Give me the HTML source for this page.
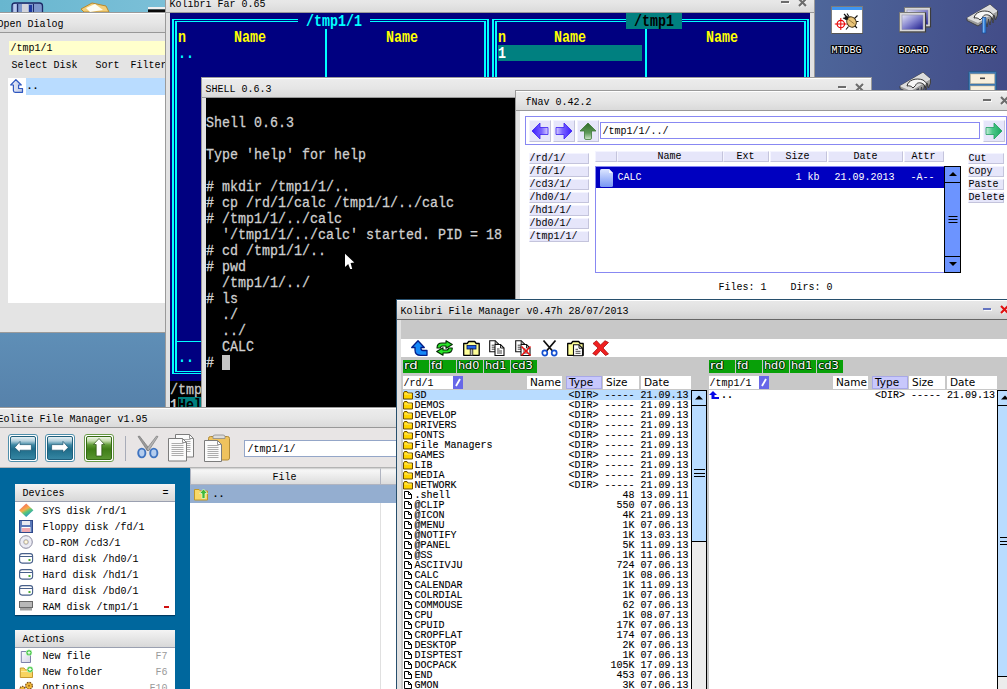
<!DOCTYPE html>
<html><head><meta charset="utf-8"><title>KolibriOS desktop</title>
<style>
html,body{margin:0;padding:0}
body{width:1007px;height:689px;overflow:hidden;position:relative;
background:linear-gradient(143deg,rgb(126,190,220) 0%,rgb(118,178,210) 8%,rgb(90,135,178) 29.8%,rgb(72,96,152) 45.1%,rgb(60,64,127) 54.7%,rgb(52,54,116) 72%,rgb(46,46,106) 100%);
font-family:"Liberation Mono",monospace;font-size:10px;line-height:10px;color:#000}
.a{position:absolute;box-sizing:border-box}
.t{position:absolute;white-space:pre;font:10px/10px "Liberation Mono",monospace;color:#000}
.v{margin-top:2px;position:absolute;white-space:pre;font:13.333px/14px "Liberation Mono",monospace;color:#d0d0d0;-webkit-text-stroke:0.25px currentColor;transform:scaleY(1.143);transform-origin:0 0}
.vb{position:absolute;white-space:pre;font:bold 13.333px/14px "Liberation Mono",monospace;margin-top:0.500px;transform:scaleY(1.180);transform-origin:0 0}
.k{position:absolute;white-space:pre;font:10px/10px "Liberation Mono",monospace;color:#000;-webkit-text-stroke:0.1px currentColor}
.w{position:absolute;white-space:pre;font:10px/10px "DejaVu Sans",sans-serif;color:#000}
.win{position:absolute;box-sizing:border-box;background:#e2e2e2;border:1px solid #9a9a9a}
.tb{position:absolute;left:0;right:0;top:0;height:19px;background:linear-gradient(#ececec,#e6e6e6 50%,#dadada);border-top:1px solid #fff;border-bottom:1px solid #989898;box-sizing:content-box}
svg{position:absolute;overflow:visible}
.cy{position:absolute;background:#0ff}
</style></head><body>

<!-- desktop wallpaper patches -->
<div class="a" style="left:0px;top:0px;width:170px;height:14px;background:linear-gradient(90deg,rgb(104,182,207),rgb(124,192,216))"></div>
<div class="a" style="left:0px;top:330px;width:170px;height:80px;background:linear-gradient(180deg,rgb(95,143,183),rgb(86,129,170))"></div>
<div class="a" style="left:810px;top:0px;width:197px;height:100px;background:linear-gradient(100deg,rgb(78,103,155),rgb(66,75,135))"></div>
<!-- desktop icons -->
<svg style="left:0;top:0" width="170" height="14" viewBox="0 0 170 14"><rect x="12" y="3" width="30.500" height="12" rx="3" fill="#7d97cc" stroke="#1c2a66" stroke-width="1.300"/><rect x="13.500" y="4" width="3" height="10" fill="#b8c8ec"/><rect x="17" y="4" width="1.200" height="10" fill="#1c2a66"/><rect x="22" y="4" width="6.500" height="10" fill="#d2d4dc"/><rect x="29" y="5" width="3" height="7" fill="#1f3aa0"/><rect x="33" y="4" width="1" height="10" fill="#1c2a66"/><path d="M81 9 L92 3 L106 6 L109 12 L84 12 Z" fill="#f3cf7a" stroke="#b98a2c" stroke-width="1"/><path d="M86 8 L95 4 L103 10 L90 12 Z" fill="#fdfdf4"/><rect x="148" y="7" width="18" height="2.4" fill="#f0f0f0"/><rect x="148" y="9.4" width="18" height="2.6" fill="#0a0a0a"/></svg>
<svg style="left:831px;top:6px" width="34" height="30" viewBox="0 0 34 30"><rect x="0.500" y="0.500" width="31" height="27" fill="#fff" stroke="#7c7c7c"/><rect x="1" y="1" width="30" height="3" fill="#3f95f0"/><path d="M0.500 27.500H32" stroke="#555" stroke-width="1"/><path d="M13 8 L17 12 M16 7.500 L18.500 11.500 M26.500 9.500 L23.500 12.500 M27.500 15.500 H24.500 M26 22 L23.500 19.500 M15 23.500 L17.500 20.500 M12 12 L15 13" stroke="#111" stroke-width="1.100" fill="none"/><ellipse cx="20.500" cy="16" rx="4.600" ry="5.400" transform="rotate(-30 20.500 16)" fill="#e9c478" stroke="#3c2c10" stroke-width="0.900"/><path d="M17.500 13.500 L23.500 18" stroke="#8a6a30" stroke-width="0.800"/><circle cx="15.300" cy="12" r="2" fill="#111"/><circle cx="9.800" cy="18" r="3.700" fill="none" stroke="#e80000" stroke-width="1.150"/><path d="M9.800 12V24M3.800 18H15.800" stroke="#e80000" stroke-width="1"/></svg>
<div class="t" style="left:831.4px;top:46px;color:#fff;text-shadow:1px 0 #000,-1px 0 #000,0 1px #000,0 -1px #000,1px 1px #000,-1px -1px #000,1px -1px #000,-1px 1px #000;">MTDBG</div>
<svg style="left:899px;top:6px" width="34" height="30" viewBox="0 0 34 30"><defs><linearGradient id="scr" x1="0" y1="0" x2="1" y2="1"><stop offset="0" stop-color="#e4e4f6"/><stop offset="0.5" stop-color="#8080cc"/><stop offset="1" stop-color="#1c1c8a"/></linearGradient></defs><rect x="5.5" y="1.5" width="26" height="19.500" fill="#d8d8d8" stroke="#7a7a7a" stroke-width="1"/><path d="M5.5 21.0H31.5V1.5" stroke="#3c3c3c" stroke-width="1.200" fill="none"/><rect x="8.0" y="4.0" width="21" height="14.500" fill="url(#scr)" stroke="#8c8cac" stroke-width="0.600"/><rect x="0.5" y="6.5" width="26" height="19.500" fill="#d8d8d8" stroke="#7a7a7a" stroke-width="1"/><path d="M0.5 26.0H26.5V6.5" stroke="#3c3c3c" stroke-width="1.200" fill="none"/><rect x="3.0" y="9.0" width="21" height="14.500" fill="url(#scr)" stroke="#8c8cac" stroke-width="0.600"/></svg>
<div class="t" style="left:898.4px;top:46px;color:#fff;text-shadow:1px 0 #000,-1px 0 #000,0 1px #000,0 -1px #000,1px 1px #000,-1px -1px #000,1px -1px #000,-1px 1px #000;">BOARD</div>
<svg style="left:966px;top:3px" width="34" height="32" viewBox="0 0 34 32"><path d="M1 15 L24 1.500 L31.500 8 V12 L29.500 17 L28.500 12.500 L27 20 L25.500 14 L24 22 L22.500 16 L21 24 L19.500 17.500 L12 23 L1 17.500 Z" fill="#9c9c9c" stroke="#3c3c3c" stroke-width="0.900" stroke-linejoin="round"/><path d="M1.500 15 L24 2 L31 8 L12 19.500 Z" fill="#dcdcdc" stroke="#f4f4f4" stroke-width="0.600"/><path d="M8 15 C9 9 17 6.500 24 9 L27.500 12 L26.500 16.500 L24.500 13 C21 11 17.500 11.500 16.500 14.500 L14 17 C12.500 15 10 14.500 8 15 Z" fill="#f6f6f6" stroke="#222" stroke-width="0.900" stroke-linejoin="round"/><rect x="16.300" y="14.500" width="3.600" height="15.500" fill="#3c8ae0" stroke="#184a92" stroke-width="0.700"/><path d="M17.300 15V29.500" stroke="#9cc8f8" stroke-width="0.800"/></svg>
<div class="t" style="left:966.4px;top:46px;color:#fff;text-shadow:1px 0 #000,-1px 0 #000,0 1px #000,0 -1px #000,1px 1px #000,-1px -1px #000,1px -1px #000,-1px 1px #000;">KPACK</div>
<svg style="left:899px;top:71px" width="34" height="32" viewBox="0 0 34 32"><path d="M1 15 L24 1.500 L31.500 8 V12 L29.500 17 L28.500 12.500 L27 20 L25.500 14 L24 22 L22.500 16 L21 24 L19.500 17.500 L12 23 L1 17.500 Z" fill="#9c9c9c" stroke="#3c3c3c" stroke-width="0.900" stroke-linejoin="round"/><path d="M1.500 15 L24 2 L31 8 L12 19.500 Z" fill="#dcdcdc" stroke="#f4f4f4" stroke-width="0.600"/><path d="M8 15 C9 9 17 6.500 24 9 L27.500 12 L26.500 16.500 L24.500 13 C21 11 17.500 11.500 16.500 14.500 L14 17 C12.500 15 10 14.500 8 15 Z" fill="#f6f6f6" stroke="#222" stroke-width="0.900" stroke-linejoin="round"/></svg>
<svg style="left:968px;top:71px" width="32" height="30" viewBox="0 0 32 30"><rect x="0.500" y="0.500" width="28" height="28" rx="1" fill="#3f78b0" stroke="#2c5888"/><rect x="2.500" y="3" width="24" height="9.500" fill="#f8efdc" stroke="#c8b898" stroke-width="0.600"/><rect x="12" y="6.500" width="5" height="1.600" fill="#444"/><rect x="2.500" y="15" width="24" height="10" fill="#f8efdc" stroke="#c8b898" stroke-width="0.600"/></svg>
<!-- Open Dialog -->
<div class="win" style="left:-7px;top:12px;width:175px;height:321px;background:#e4e4e4;border-color:#9a9a9a"><div class="tb" style="height:18px;"></div></div><div class="t" style="left:-2.6px;top:20px;color:#000">Open Dialog</div>
<div class="a" style="left:9px;top:41px;width:160px;height:14px;background:#ffffcc"></div>
<div class="t" style="left:10.4px;top:44px;">/tmp1/1</div>
<div class="t" style="left:11.4px;top:61px;">Select Disk</div>
<div class="t" style="left:95.4px;top:61px;">Sort</div>
<div class="t" style="left:130.4px;top:61px;">Filter</div>
<div class="a" style="left:8px;top:78px;width:160px;height:225px;background:#fff"></div>
<div class="a" style="left:26px;top:78px;width:142px;height:17px;background:#b9dcff"></div>
<svg style="left:10px;top:79px" width="14" height="15" viewBox="0 0 14 15"><defs><linearGradient id="od" x1="0" y1="0" x2="1" y2="0"><stop offset="0" stop-color="#eef1fa"/><stop offset="1" stop-color="#bcc6e2"/></linearGradient></defs><path d="M5.900 0.700 L0.700 6 H3.400 V11.500 Q3.400 13.300 5.200 13.300 H12.500 V9.500 H8.600 V6 H11.300 Z" fill="url(#od)" stroke="#3058c0" stroke-width="1.200" stroke-linejoin="round"/></svg>
<div class="t" style="left:26.4px;top:82px;font-weight:bold">..</div>
<!-- Kolibri Far -->
<div class="win" style="left:165px;top:-8px;width:650px;height:427px;background:#e2e2e2;border-color:#9a9a9a"><div class="tb" style="height:18px;"></div></div><div class="t" style="left:169.4px;top:0px;color:#000">Kolibri Far 0.65</div><div class="a" style="left:781px;top:1px;width:8px;height:2px;background:#6c6c6c;box-shadow:1px 1px 0 rgba(255,255,255,.8)"></div><svg style="left:798px;top:-2px" width="9" height="9" viewBox="0 0 9 9"><path d="M2 2L8.5 8.5M8.5 2L2 8.5" stroke="rgba(255,255,255,.7)" stroke-width="2" fill="none"/><path d="M1 1L8 8M8 1L1 8" stroke="#6c6c6c" stroke-width="2.1" fill="none"/></svg>
<div class="a" style="left:170px;top:13px;width:640px;height:400px;background:#000080"></div>
<div class="cy" style="left:172px;top:19px;width:2px;height:355px"></div><div class="cy" style="left:175px;top:21px;width:2px;height:351px"></div><div class="cy" style="left:487px;top:19px;width:2px;height:355px"></div><div class="cy" style="left:484px;top:21px;width:2px;height:351px"></div><div class="cy" style="left:172px;top:19px;width:317px;height:1px"></div><div class="cy" style="left:175px;top:21px;width:311px;height:1px"></div><div class="cy" style="left:175px;top:371px;width:311px;height:1px"></div><div class="cy" style="left:172px;top:373px;width:317px;height:1px"></div><div class="cy" style="left:175px;top:341px;width:311px;height:1px"></div><div class="cy" style="left:325px;top:29px;width:2px;height:312px"></div><div class="a" style="left:298px;top:13px;width:72px;height:16px;background:#000080"></div><div class="vb" style="left:298px;top:13px;color:#0ff"> /tmp1/1 </div><div class="vb" style="left:178px;top:29px;color:#ff0">n</div><div class="vb" style="left:234px;top:29px;color:#ff0">Name</div><div class="vb" style="left:386px;top:29px;color:#ff0">Name</div>
<div class="cy" style="left:492px;top:19px;width:2px;height:355px"></div><div class="cy" style="left:495px;top:21px;width:2px;height:351px"></div><div class="cy" style="left:807px;top:19px;width:2px;height:355px"></div><div class="cy" style="left:804px;top:21px;width:2px;height:351px"></div><div class="cy" style="left:492px;top:19px;width:317px;height:1px"></div><div class="cy" style="left:495px;top:21px;width:311px;height:1px"></div><div class="cy" style="left:495px;top:371px;width:311px;height:1px"></div><div class="cy" style="left:492px;top:373px;width:317px;height:1px"></div><div class="cy" style="left:495px;top:341px;width:311px;height:1px"></div><div class="cy" style="left:645px;top:29px;width:2px;height:312px"></div><div class="a" style="left:626px;top:13px;width:56px;height:16px;background:#008080"></div><div class="vb" style="left:626px;top:13px;color:#000"> /tmp1 </div><div class="vb" style="left:498px;top:29px;color:#ff0">n</div><div class="vb" style="left:554px;top:29px;color:#ff0">Name</div><div class="vb" style="left:706px;top:29px;color:#ff0">Name</div>
<div class="vb" style="left:178px;top:45px;color:#0ff">..</div>
<div class="vb" style="left:178px;top:349px;color:#0ff">..</div>
<div class="a" style="left:498px;top:45px;width:144px;height:16px;background:#008080"></div>
<div class="vb" style="left:498px;top:45px;color:#fff">1</div>
<div class="a" style="left:170px;top:381px;width:640px;height:32px;background:#000"></div>
<div class="v" style="left:170px;top:381px;color:#c8c8c8">/tmp1/1&gt;</div>
<div class="vb" style="left:170px;top:397px;color:#c8c8c8">1</div>
<div class="a" style="left:178px;top:397px;width:48px;height:16px;background:#008080"></div>
<div class="vb" style="left:178px;top:397px;color:#000">Help</div>
<!-- Shell -->
<div class="win" style="left:201px;top:77px;width:671px;height:340px;background:#e2e2e2;border-color:#9a9a9a"><div class="tb" style="height:18px;"></div></div><div class="t" style="left:205.4px;top:85px;color:#000">SHELL 0.6.3</div><div class="a" style="left:838px;top:86px;width:8px;height:2px;background:#6c6c6c;box-shadow:1px 1px 0 rgba(255,255,255,.8)"></div><svg style="left:855px;top:83px" width="9" height="9" viewBox="0 0 9 9"><path d="M2 2L8.5 8.5M8.5 2L2 8.5" stroke="rgba(255,255,255,.7)" stroke-width="2" fill="none"/><path d="M1 1L8 8M8 1L1 8" stroke="#6c6c6c" stroke-width="2.1" fill="none"/></svg>
<div class="a" style="left:206px;top:98px;width:661px;height:314px;background:#000"></div>
<div class="v" style="left:206px;top:114px;">Shell 0.6.3</div>
<div class="v" style="left:206px;top:146px;">Type 'help' for help</div>
<div class="v" style="left:206px;top:178px;"># mkdir /tmp1/1/..</div>
<div class="v" style="left:206px;top:194px;"># cp /rd/1/calc /tmp1/1/../calc</div>
<div class="v" style="left:206px;top:210px;"># /tmp1/1/../calc</div>
<div class="v" style="left:206px;top:226px;">  '/tmp1/1/../calc' started. PID = 18</div>
<div class="v" style="left:206px;top:242px;"># cd /tmp1/1/..</div>
<div class="v" style="left:206px;top:258px;"># pwd</div>
<div class="v" style="left:206px;top:274px;">  /tmp1/1/../</div>
<div class="v" style="left:206px;top:290px;"># ls</div>
<div class="v" style="left:206px;top:306px;">  ./</div>
<div class="v" style="left:206px;top:322px;">  ../</div>
<div class="v" style="left:206px;top:338px;">  CALC</div>
<div class="v" style="left:206px;top:354px;">#</div>
<div class="a" style="left:222px;top:355px;width:8px;height:15px;background:#c4c4c4"></div>
<!-- fNav -->
<div class="win" style="left:515px;top:90px;width:500px;height:215px;background:#e2e2e2;border-color:#9a9a9a"><div class="tb" style="height:18px;"></div></div><div class="t" style="left:525.4px;top:98px;color:#000">fNav 0.42.2</div><div class="a" style="left:983px;top:99px;width:8px;height:2px;background:#6c6c6c;box-shadow:1px 1px 0 rgba(255,255,255,.8)"></div><svg style="left:1000px;top:96px" width="9" height="9" viewBox="0 0 9 9"><path d="M2 2L8.5 8.5M8.5 2L2 8.5" stroke="rgba(255,255,255,.7)" stroke-width="2" fill="none"/><path d="M1 1L8 8M8 1L1 8" stroke="#6c6c6c" stroke-width="2.1" fill="none"/></svg>
<div class="a" style="left:520px;top:111px;width:490px;height:190px;background:#fff"></div>
<div class="a" style="left:525px;top:116px;width:482px;height:29px;background:#fff;border:1px solid #8888f2"></div>
<div class="a" style="left:529px;top:120px;width:22px;height:22px;background:#e6e6fa;border-top:1px solid #f4f4ff;border-left:1px solid #f4f4ff;border-bottom:1px solid #c4c4dc;border-right:1px solid #c4c4dc;"></div>
<svg style="left:529px;top:120px" width="22" height="22" viewBox="0 0 22 22"><defs><linearGradient id="gL" x1="0" y1="0" x2="1" y2="0"><stop offset="0" stop-color="#3a1cff"/><stop offset="0.6" stop-color="#7a64ff"/><stop offset="1" stop-color="#d8d0ff"/></linearGradient></defs><path d="M3 11 L11 3 V7.500 H19 V14.500 H11 V19 Z" fill="url(#gL)" stroke="#3a20f0" stroke-width="0.8"/></svg>
<div class="a" style="left:553px;top:120px;width:22px;height:22px;background:#e6e6fa;border-top:1px solid #f4f4ff;border-left:1px solid #f4f4ff;border-bottom:1px solid #c4c4dc;border-right:1px solid #c4c4dc;"></div>
<svg style="left:553px;top:120px" width="22" height="22" viewBox="0 0 22 22"><defs><linearGradient id="gR" x1="1" y1="0" x2="0" y2="0"><stop offset="0" stop-color="#3a1cff"/><stop offset="0.6" stop-color="#7a64ff"/><stop offset="1" stop-color="#d8d0ff"/></linearGradient></defs><path d="M19 11 L11 3 V7.500 H3 V14.500 H11 V19 Z" fill="url(#gR)" stroke="#3a20f0" stroke-width="0.8"/></svg>
<div class="a" style="left:577px;top:120px;width:22px;height:22px;background:#e6e6fa;border-top:1px solid #f4f4ff;border-left:1px solid #f4f4ff;border-bottom:1px solid #c4c4dc;border-right:1px solid #c4c4dc;"></div>
<svg style="left:577px;top:120px" width="22" height="22" viewBox="0 0 22 22"><defs><linearGradient id="gU" x1="0" y1="0" x2="0" y2="1"><stop offset="0" stop-color="#2f6a2a"/><stop offset="0.6" stop-color="#5e9a58"/><stop offset="1" stop-color="#cfe6cc"/></linearGradient></defs><path d="M11 3 L3 11 H7.500 V18 Q7.500 19.500 9 19.500 H13 Q14.500 19.500 14.500 18 V11 H19 Z" fill="url(#gU)" stroke="#3c7a36" stroke-width="0.8"/></svg>
<div class="a" style="left:983px;top:120px;width:22px;height:22px;background:#e6e6fa;border-top:1px solid #f4f4ff;border-left:1px solid #f4f4ff;border-bottom:1px solid #c4c4dc;border-right:1px solid #c4c4dc;"></div>
<svg style="left:983px;top:120px" width="22" height="22" viewBox="0 0 22 22"><defs><linearGradient id="gG" x1="1" y1="0" x2="0" y2="0"><stop offset="0" stop-color="#18a860"/><stop offset="0.6" stop-color="#4cc88a"/><stop offset="1" stop-color="#c8f0dc"/></linearGradient></defs><path d="M19 11 L11 3 V7.500 H3 V14.500 H11 V19 Z" fill="url(#gG)" stroke="#20a060" stroke-width="0.8"/></svg>
<div class="a" style="left:600px;top:122px;width:380px;height:17px;background:#fff;border:1px solid #8888f2"></div>
<div class="t" style="left:602.4px;top:127px;">/tmp1/1/../</div>
<div class="a" style="left:529px;top:153px;width:60px;height:11px;background:#e6e6fa;border-top:1px solid #f4f4ff;border-left:1px solid #f4f4ff;border-bottom:1px solid #c4c4dc;border-right:1px solid #c4c4dc;"></div>
<div class="t" style="left:529.4px;top:154px;">/rd/1/</div>
<div class="a" style="left:529px;top:166px;width:60px;height:11px;background:#e6e6fa;border-top:1px solid #f4f4ff;border-left:1px solid #f4f4ff;border-bottom:1px solid #c4c4dc;border-right:1px solid #c4c4dc;"></div>
<div class="t" style="left:529.4px;top:167px;">/fd/1/</div>
<div class="a" style="left:529px;top:179px;width:60px;height:11px;background:#e6e6fa;border-top:1px solid #f4f4ff;border-left:1px solid #f4f4ff;border-bottom:1px solid #c4c4dc;border-right:1px solid #c4c4dc;"></div>
<div class="t" style="left:529.4px;top:180px;">/cd3/1/</div>
<div class="a" style="left:529px;top:192px;width:60px;height:11px;background:#e6e6fa;border-top:1px solid #f4f4ff;border-left:1px solid #f4f4ff;border-bottom:1px solid #c4c4dc;border-right:1px solid #c4c4dc;"></div>
<div class="t" style="left:529.4px;top:193px;">/hd0/1/</div>
<div class="a" style="left:529px;top:205px;width:60px;height:11px;background:#e6e6fa;border-top:1px solid #f4f4ff;border-left:1px solid #f4f4ff;border-bottom:1px solid #c4c4dc;border-right:1px solid #c4c4dc;"></div>
<div class="t" style="left:529.4px;top:206px;">/hd1/1/</div>
<div class="a" style="left:529px;top:218px;width:60px;height:11px;background:#e6e6fa;border-top:1px solid #f4f4ff;border-left:1px solid #f4f4ff;border-bottom:1px solid #c4c4dc;border-right:1px solid #c4c4dc;"></div>
<div class="t" style="left:529.4px;top:219px;">/bd0/1/</div>
<div class="a" style="left:529px;top:231px;width:60px;height:11px;background:#e6e6fa;border-top:1px solid #f4f4ff;border-left:1px solid #f4f4ff;border-bottom:1px solid #c4c4dc;border-right:1px solid #c4c4dc;"></div>
<div class="t" style="left:529.4px;top:232px;">/tmp1/1/</div>
<div class="a" style="left:595px;top:151px;width:22px;height:11px;background:#e6e6fa;border-top:1px solid #f4f4ff;border-left:1px solid #f4f4ff;border-bottom:1px solid #c4c4dc;border-right:1px solid #c4c4dc;"></div>
<div class="a" style="left:617px;top:151px;width:106px;height:11px;background:#e6e6fa;border-top:1px solid #f4f4ff;border-left:1px solid #f4f4ff;border-bottom:1px solid #c4c4dc;border-right:1px solid #c4c4dc;"></div>
<div class="t" style="left:657.4px;top:152px;">Name</div>
<div class="a" style="left:723px;top:151px;width:46px;height:11px;background:#e6e6fa;border-top:1px solid #f4f4ff;border-left:1px solid #f4f4ff;border-bottom:1px solid #c4c4dc;border-right:1px solid #c4c4dc;"></div>
<div class="t" style="left:736.4px;top:152px;">Ext</div>
<div class="a" style="left:770px;top:151px;width:57px;height:11px;background:#e6e6fa;border-top:1px solid #f4f4ff;border-left:1px solid #f4f4ff;border-bottom:1px solid #c4c4dc;border-right:1px solid #c4c4dc;"></div>
<div class="t" style="left:785.4px;top:152px;">Size</div>
<div class="a" style="left:828px;top:151px;width:75px;height:11px;background:#e6e6fa;border-top:1px solid #f4f4ff;border-left:1px solid #f4f4ff;border-bottom:1px solid #c4c4dc;border-right:1px solid #c4c4dc;"></div>
<div class="t" style="left:853.4px;top:152px;">Date</div>
<div class="a" style="left:904px;top:151px;width:40px;height:11px;background:#e6e6fa;border-top:1px solid #f4f4ff;border-left:1px solid #f4f4ff;border-bottom:1px solid #c4c4dc;border-right:1px solid #c4c4dc;"></div>
<div class="t" style="left:911.4px;top:152px;">Attr</div>
<div class="a" style="left:595px;top:166px;width:350px;height:107px;background:#fff;border:1px solid #8888f2"></div>
<div class="a" style="left:596px;top:167px;width:348px;height:21px;background:#0000c0"></div>
<svg style="left:600px;top:169px" width="13" height="18" viewBox="0 0 13 18"><defs><linearGradient id="fi" x1="0" y1="0" x2="0" y2="1"><stop offset="0" stop-color="#dde6ff"/><stop offset="1" stop-color="#7696f4"/></linearGradient></defs><path d="M1.500 0 H9 L13 4 V16.500 Q13 18 11.500 18 H1.500 Q0 18 0 16.500 V1.500 Q0 0 1.500 0 Z" fill="url(#fi)"/><path d="M9 0 L13 4 H9 Z" fill="#f4f7ff"/></svg>
<div class="t" style="left:617.4px;top:173px;color:#fff">CALC</div>
<div class="t" style="left:795.4px;top:173px;color:#fff">1 kb</div>
<div class="t" style="left:834.4px;top:173px;color:#fff">21.09.2013</div>
<div class="t" style="left:910.4px;top:173px;color:#fff">-A--</div>
<div class="a" style="left:944px;top:166px;width:17px;height:107px;background:#6c94ff;border:1px solid #000"></div>
<div class="a" style="left:944px;top:182px;width:17px;height:1px;background:#000"></div>
<div class="a" style="left:944px;top:256px;width:17px;height:1px;background:#000"></div>
<svg style="left:944px;top:166px" width="18" height="107" viewBox="0 0 18 107"><path d="M9 6 L13 10 H5 Z M9 100 L13 96 H5 Z" fill="#000"/><path d="M4.500 50.500H13.500M4.500 53.500H13.500M4.500 56.500H13.500" stroke="#000" stroke-width="1"/></svg>
<div class="a" style="left:968px;top:153px;width:36px;height:11px;background:#e6e6fa;border-top:1px solid #f4f4ff;border-left:1px solid #f4f4ff;border-bottom:1px solid #c4c4dc;border-right:1px solid #c4c4dc;"></div>
<div class="t" style="left:968.4px;top:154px;">Cut</div>
<div class="a" style="left:968px;top:166px;width:36px;height:11px;background:#e6e6fa;border-top:1px solid #f4f4ff;border-left:1px solid #f4f4ff;border-bottom:1px solid #c4c4dc;border-right:1px solid #c4c4dc;"></div>
<div class="t" style="left:968.4px;top:167px;">Copy</div>
<div class="a" style="left:968px;top:179px;width:36px;height:11px;background:#e6e6fa;border-top:1px solid #f4f4ff;border-left:1px solid #f4f4ff;border-bottom:1px solid #c4c4dc;border-right:1px solid #c4c4dc;"></div>
<div class="t" style="left:968.4px;top:180px;">Paste</div>
<div class="a" style="left:968px;top:192px;width:36px;height:11px;background:#e6e6fa;border-top:1px solid #f4f4ff;border-left:1px solid #f4f4ff;border-bottom:1px solid #c4c4dc;border-right:1px solid #c4c4dc;"></div>
<div class="t" style="left:968.4px;top:193px;">Delete</div>
<div class="t" style="left:718.4px;top:283px;">Files: 1</div>
<div class="t" style="left:790.4px;top:283px;">Dirs: 0</div>
<!-- Eolite -->
<div class="win" style="left:-7px;top:407px;width:404px;height:300px;background:#e2e2e2;border-color:#9a9a9a"><div class="tb" style="height:18px;"></div></div><div class="t" style="left:-2.6px;top:415px;color:#000">Eolite File Manager v1.95</div>
<div class="a" style="left:0px;top:428px;width:397px;height:40px;background:#e8e5e5;border-bottom:1px solid #b4b4b4"></div>
<div class="a" style="left:8px;top:434px;width:30px;height:28px;background:#fff;border:1px solid #4f8eaa;border-radius:3px"></div><div class="a" style="left:10px;top:436px;width:26px;height:24px;background:linear-gradient(#e6eff3 0%,#b4d0dc 18%,#3c87a3 36%,#1f6b89 55%,#2a7a97 80%,#3686a3 100%);border:1px solid #1f5f7c;border-radius:2px"></div>
<svg style="left:8px;top:434px" width="30" height="28" viewBox="0 0 30 28"><path d="M6.700 13.600 L12 7.400 V10.600 H23.400 V16.200 H12 V18.600 Z" fill="#fff" stroke="#1a5570" stroke-width="0.700" stroke-linejoin="round"/></svg>
<div class="a" style="left:45px;top:434px;width:30px;height:28px;background:#fff;border:1px solid #4f8eaa;border-radius:3px"></div><div class="a" style="left:47px;top:436px;width:26px;height:24px;background:linear-gradient(#e6eff3 0%,#b4d0dc 18%,#3c87a3 36%,#1f6b89 55%,#2a7a97 80%,#3686a3 100%);border:1px solid #1f5f7c;border-radius:2px"></div>
<svg style="left:45px;top:434px" width="30" height="28" viewBox="0 0 30 28"><path d="M23.300 13.600 L18 7.400 V10.600 H6.600 V16.200 H18 V18.600 Z" fill="#fff" stroke="#1a5570" stroke-width="0.700" stroke-linejoin="round"/></svg>
<div class="a" style="left:84px;top:434px;width:30px;height:28px;background:#fff;border:1px solid #6a9a48;border-radius:3px"></div><div class="a" style="left:86px;top:436px;width:26px;height:24px;background:linear-gradient(#eef4e6 0%,#c4dcac 18%,#5e9a34 36%,#3f7d17 55%,#4c8a24 80%,#5a9632 100%);border:1px solid #356a14;border-radius:2px"></div>
<svg style="left:84px;top:434px" width="30" height="28" viewBox="0 0 30 28"><path d="M15 4.500 L9.500 10.500 H12.200 V22 H17.800 V10.500 H20.500 Z" fill="#fff" stroke="#2a5010" stroke-width="0.700" stroke-linejoin="round"/></svg>
<div class="a" style="left:125px;top:436px;width:1px;height:25px;background:#a8acb8"></div>
<svg style="left:136px;top:434px" width="24" height="28" viewBox="0 0 24 28"><path d="M2 2.500 L3.500 2 L13.500 15 L11.500 17 Z" fill="#9a9a9a" stroke="#6e6e6e" stroke-width="0.600"/><path d="M22 2.500 L20.500 2 L10.500 15 L12.500 17 Z" fill="#b4b4b4" stroke="#6e6e6e" stroke-width="0.600"/><ellipse cx="5.800" cy="19" rx="3.600" ry="4.400" fill="#b4cdee" stroke="#3f74c0" stroke-width="1.900"/><ellipse cx="17.800" cy="19" rx="3.600" ry="4.400" fill="#b4cdee" stroke="#3f74c0" stroke-width="1.900"/></svg>
<svg style="left:167px;top:434px" width="28" height="28" viewBox="0 0 28 28"><path d="M8.5 0.5 H22.5 L26.5 4.5 V23.0 H8.5 Z" fill="#fbfbfb" stroke="#7c7c7c" stroke-width="1"/><path d="M22.5 0.5 V4.5 H26.5" fill="none" stroke="#7c7c7c" stroke-width="0.800"/><path d="M11.5 5.5H23.5" stroke="#a4a4a4" stroke-width="0.900"/><path d="M11.5 7.5H23.5" stroke="#a4a4a4" stroke-width="0.900"/><path d="M11.5 9.5H23.5" stroke="#a4a4a4" stroke-width="0.900"/><path d="M11.5 11.5H23.5" stroke="#a4a4a4" stroke-width="0.900"/><path d="M11.5 13.5H23.5" stroke="#a4a4a4" stroke-width="0.900"/><path d="M11.5 15.5H23.5" stroke="#a4a4a4" stroke-width="0.900"/><path d="M11.5 17.5H23.5" stroke="#a4a4a4" stroke-width="0.900"/><path d="M1.5 4.5 H15.5 L19.5 8.5 V27.0 H1.5 Z" fill="#fbfbfb" stroke="#7c7c7c" stroke-width="1"/><path d="M15.5 4.5 V8.5 H19.5" fill="none" stroke="#7c7c7c" stroke-width="0.800"/><path d="M4.5 9.5H16.5" stroke="#a4a4a4" stroke-width="0.900"/><path d="M4.5 11.5H16.5" stroke="#a4a4a4" stroke-width="0.900"/><path d="M4.5 13.5H16.5" stroke="#a4a4a4" stroke-width="0.900"/><path d="M4.5 15.5H16.5" stroke="#a4a4a4" stroke-width="0.900"/><path d="M4.5 17.5H16.5" stroke="#a4a4a4" stroke-width="0.900"/><path d="M4.5 19.5H16.5" stroke="#a4a4a4" stroke-width="0.900"/><path d="M4.5 21.5H16.5" stroke="#a4a4a4" stroke-width="0.900"/></svg>
<svg style="left:203px;top:434px" width="28" height="28" viewBox="0 0 28 28"><rect x="5.500" y="2.500" width="21" height="23.500" rx="2" fill="#eec25e" stroke="#b08a38"/><path d="M10 4.500 V2.500 Q10 1 12 1 H20 Q22 1 22 2.500 V4.500 Z" fill="#dcdcdc" stroke="#8c8c8c" stroke-width="0.800"/><path d="M1.5 6.5 H14.5 L18.5 10.5 V27.5 H1.5 Z" fill="#fbfbfb" stroke="#7c7c7c" stroke-width="1"/><path d="M14.5 6.5 V10.5 H18.5" fill="none" stroke="#7c7c7c" stroke-width="0.800"/><path d="M4.5 11.5H15.5" stroke="#a4a4a4" stroke-width="0.900"/><path d="M4.5 13.5H15.5" stroke="#a4a4a4" stroke-width="0.900"/><path d="M4.5 15.5H15.5" stroke="#a4a4a4" stroke-width="0.900"/><path d="M4.5 17.5H15.5" stroke="#a4a4a4" stroke-width="0.900"/><path d="M4.5 19.5H15.5" stroke="#a4a4a4" stroke-width="0.900"/><path d="M4.5 21.5H15.5" stroke="#a4a4a4" stroke-width="0.900"/><path d="M4.5 23.5H15.5" stroke="#a4a4a4" stroke-width="0.900"/></svg>
<div class="a" style="left:244px;top:440px;width:160px;height:17px;background:#fff;border:1px solid #94a6c8"></div>
<div class="t" style="left:247.4px;top:445px;">/tmp1/1/</div>
<div class="a" style="left:0px;top:468px;width:190px;height:230px;background:#00679d"></div>
<div class="a" style="left:15px;top:484px;width:160px;height:18px;background:linear-gradient(#f4f4f4,#d8d8d8);border-bottom:1px solid #9aa0b0;"></div>
<div class="t" style="left:22.4px;top:489px;">Devices</div>
<div class="t" style="left:162.4px;top:489px;">=</div>
<div class="a" style="left:15px;top:502px;width:160px;height:113px;background:#fff;box-shadow:0 1px 1px rgba(0,30,60,.6)"></div>
<div class="t" style="left:42.4px;top:507px;">SYS disk /rd/1</div>
<div class="t" style="left:42.4px;top:523px;">Floppy disk /fd/1</div>
<div class="t" style="left:42.4px;top:539px;">CD-ROM /cd3/1</div>
<div class="t" style="left:42.4px;top:555px;">Hard disk /hd0/1</div>
<div class="t" style="left:42.4px;top:571px;">Hard disk /hd1/1</div>
<div class="t" style="left:42.4px;top:587px;">Hard disk /bd0/1</div>
<div class="t" style="left:42.4px;top:603px;">RAM disk /tmp1/1</div>
<div class="a" style="left:164px;top:606px;width:5px;height:2px;background:#d01010"></div>
<svg style="left:19px;top:503px" width="16" height="15" viewBox="0 0 16 15"><defs><linearGradient id="sy" x1="0.2" y1="0" x2="0.8" y2="1"><stop offset="0" stop-color="#f05a64"/><stop offset="0.42" stop-color="#f8ac48"/><stop offset="0.6" stop-color="#58c878"/><stop offset="1" stop-color="#1484e4"/></linearGradient></defs><path d="M7.200 0.500 L14.400 7.200 L7.200 14 L0 7.200 Z" fill="url(#sy)"/></svg>
<svg style="left:19px;top:520px" width="15" height="13" viewBox="0 0 15 13"><rect x="0.500" y="0.500" width="13" height="12" fill="#5a78b8" stroke="#30488a"/><rect x="3" y="1" width="8" height="4" fill="#e8e8f0"/><rect x="2.500" y="7" width="9" height="5" fill="#fff"/><path d="M3 9H11M3 11H11" stroke="#e05060" stroke-width="1"/></svg>
<svg style="left:19px;top:535px" width="15" height="15" viewBox="0 0 15 15"><circle cx="7" cy="7" r="6.300" fill="#ececf4" stroke="#8a8aa0"/><circle cx="7" cy="7" r="2.300" fill="#f8e8b0" stroke="#a8a8b8"/><circle cx="7" cy="7" r="0.900" fill="#fff"/></svg>
<svg style="left:19px;top:553px" width="15" height="11" viewBox="0 0 15 11"><rect x="0.600" y="0.600" width="13" height="9.500" rx="2.500" fill="#fff" stroke="#48608a" stroke-width="1.100"/><path d="M1 3.500H13.500" stroke="#48608a" stroke-width="1"/><rect x="9.500" y="6" width="2" height="2" fill="#50b030"/></svg>
<svg style="left:19px;top:569px" width="15" height="11" viewBox="0 0 15 11"><rect x="0.600" y="0.600" width="13" height="9.500" rx="2.500" fill="#fff" stroke="#48608a" stroke-width="1.100"/><path d="M1 3.500H13.500" stroke="#48608a" stroke-width="1"/><rect x="9.500" y="6" width="2" height="2" fill="#50b030"/></svg>
<svg style="left:19px;top:585px" width="15" height="11" viewBox="0 0 15 11"><rect x="0.600" y="0.600" width="13" height="9.500" rx="2.500" fill="#fff" stroke="#48608a" stroke-width="1.100"/><path d="M1 3.500H13.500" stroke="#48608a" stroke-width="1"/><rect x="9.500" y="6" width="2" height="2" fill="#50b030"/></svg>
<svg style="left:19px;top:601px" width="15" height="10" viewBox="0 0 15 10"><rect x="0.500" y="0.500" width="13" height="6" fill="#b8b8b8" stroke="#686868"/><path d="M2 7V9.500M4 7V9.500M6 7V9.500M8 7V9.500M10 7V9.500M12 7V9.500" stroke="#444" stroke-width="1"/></svg>
<div class="a" style="left:15px;top:630px;width:160px;height:18px;background:linear-gradient(#f4f4f4,#d8d8d8);border-bottom:1px solid #9aa0b0;"></div>
<div class="t" style="left:22.4px;top:635px;">Actions</div>
<div class="a" style="left:15px;top:648px;width:160px;height:50px;background:#fff"></div>
<div class="t" style="left:42.4px;top:652px;">New file</div>
<div class="t" style="left:155.4px;top:652px;color:#9a9a9a">F7</div>
<div class="t" style="left:42.4px;top:668px;">New folder</div>
<div class="t" style="left:155.4px;top:668px;color:#9a9a9a">F6</div>
<div class="t" style="left:42.4px;top:684px;">Options</div>
<div class="t" style="left:149.4px;top:684px;color:#9a9a9a">F10</div>
<svg style="left:20px;top:650px" width="14" height="14" viewBox="0 0 14 14"><defs><linearGradient id="nf" x1="0" y1="0" x2="1" y2="1"><stop offset="0" stop-color="#fafaff"/><stop offset="1" stop-color="#d4d4e4"/></linearGradient></defs><path d="M1.300 1.500H10.500V12.500H1.300Z" fill="url(#nf)" stroke="#7074a0" stroke-width="0.900"/><circle cx="9" cy="2.8" r="3" fill="#3cc43c" stroke="#e8ffe8" stroke-width="0.6"/><path d="M7.4 2.8H10.6M9 1.1999999999999997V4.4" stroke="#fff" stroke-width="1.1"/></svg>
<svg style="left:19px;top:666px" width="16" height="14" viewBox="0 0 16 14"><path d="M1.300 2 H5 L6.500 3.800 H13.500 V11.500 H1.300 Z" fill="#f8d460" stroke="#c09020" stroke-width="0.900" stroke-linejoin="round"/><path d="M2 5.500H13" stroke="#fdeaa0" stroke-width="1"/><circle cx="11" cy="3.4" r="3" fill="#3cc43c" stroke="#e8ffe8" stroke-width="0.6"/><path d="M9.4 3.4H12.6M11 1.7999999999999998V5.0" stroke="#fff" stroke-width="1.1"/></svg>
<svg style="left:19px;top:681px" width="16" height="9" viewBox="0 0 16 9"><circle cx="10" cy="4.800" r="3.300" fill="#f0b838" stroke="#7a4a10" stroke-width="1.400" stroke-dasharray="1.600 1"/><circle cx="10" cy="4.800" r="2.600" fill="#f0b838"/><circle cx="10" cy="4.800" r="1" fill="#a06820"/><circle cx="3.500" cy="8" r="2.600" fill="#f0b838" stroke="#7a4a10" stroke-width="1.200" stroke-dasharray="1.400 0.900"/></svg>
<div class="a" style="left:190px;top:468px;width:207px;height:230px;background:#fff"></div>
<div class="a" style="left:190px;top:468px;width:191px;height:17px;background:linear-gradient(#ececec,#f6f6f6 12%,#dcdcdc);border:1px solid #b0b4c0;border-top-color:#d4d4d4"></div>
<div class="a" style="left:381px;top:468px;width:16px;height:17px;background:linear-gradient(#ececec,#f6f6f6 12%,#dcdcdc);border:1px solid #b0b4c0;border-left:none;border-top-color:#d4d4d4"></div>
<div class="t" style="left:272.4px;top:473px;">File</div>
<div class="a" style="left:190px;top:485px;width:207px;height:18px;background:#94aed0"></div>
<div class="a" style="left:380px;top:503px;width:1px;height:195px;background:#e0e0e0"></div>
<svg style="left:194px;top:487px" width="15" height="14" viewBox="0 0 15 14"><path d="M0.500 2.500 H5 L6.500 4 H13.500 V13 H0.500 Z" fill="#f8d868" stroke="#c09828"/><path d="M9.500 2 L5.500 6.500 H8 V11.500 H11 V6.500 H13.500 Z" fill="#40b838" stroke="#e8ffe0" stroke-width="0.7"/></svg>
<div class="t" style="left:212.4px;top:490px;font-weight:bold">..</div>
<!-- Kolibri File Manager -->
<div class="win" style="left:396px;top:299px;width:621px;height:400px;background:#e2e2e2;border-color:#274f6d"><div class="tb" style="height:18px;border-bottom-color:#666;background:linear-gradient(#e8e8e8,#e0e0e0 50%,#d0d0d0)"></div></div><div class="t" style="left:400.4px;top:307px;color:#000">Kolibri File Manager v0.47h 28/07/2013</div><div class="a" style="left:983px;top:308px;width:8px;height:2px;background:#6474c0;box-shadow:1px 1px 0 rgba(255,255,255,.8)"></div><svg style="left:1000px;top:305px" width="9" height="9" viewBox="0 0 9 9"><path d="M2 2L8.5 8.5M8.5 2L2 8.5" stroke="rgba(255,255,255,.7)" stroke-width="2" fill="none"/><path d="M1 1L8 8M8 1L1 8" stroke="#e01010" stroke-width="2.1" fill="none"/></svg>
<div class="a" style="left:401px;top:320px;width:611px;height:370px;background:#c8c8c8"></div>
<div class="a" style="left:401px;top:339px;width:611px;height:18px;background:#fff"></div>
<svg style="left:411px;top:340px" width="20" height="18" viewBox="0 0 20 18"><path d="M7 0.700 L0.700 7.500 H4 V10 Q4 15.300 9.500 15.300 H16 V10.500 H12 Q10 10.500 10 8.500 V7.500 H13.300 Z" fill="#1488f8" stroke="#001c88" stroke-width="1.300" stroke-linejoin="round"/></svg>
<svg style="left:436px;top:340px" width="20" height="18" viewBox="0 0 20 18"><path d="M1 8 Q1 3 6 3 H10 V0.700 L16.300 4.500 L10 8.300 V6 H6.500 Q4.500 6 4.500 8 Z" fill="#28e428" stroke="#002800" stroke-width="1.100" stroke-linejoin="round"/><path d="M16.300 8 Q16.300 13 11 13 H7 V15.300 L0.700 11.500 L7 7.700 V10 H10.500 Q12.500 10 12.500 8 Z" fill="#28e428" stroke="#002800" stroke-width="1.100" stroke-linejoin="round"/></svg>
<svg style="left:463px;top:340px" width="20" height="18" viewBox="0 0 20 18"><path d="M0.700 3.500 h3.500 l1.500 -2 h6 l1.500 2 h3 v11.800 h-15.500 z" fill="#ffff98" stroke="#000" stroke-width="1.300" stroke-linejoin="round"/><rect x="4" y="5.500" width="9" height="3.500" fill="#2468e8" stroke="#001060" stroke-width="0.800"/><rect x="7.200" y="9" width="2.600" height="6.500" fill="#b8b8b8" stroke="#202020" stroke-width="0.800"/></svg>
<svg style="left:489px;top:340px" width="20" height="18" viewBox="0 0 20 18"><path d="M0.7 0.7 h5.500 l3.500 3.500 v7.500 h-9 Z" fill="#fff" stroke="#101010" stroke-width="1.100"/><path d="M6.2 0.7 v3.500 h3.500" fill="none" stroke="#101010" stroke-width="0.900"/><path d="M2.7 5.2h2.500M2.7 7.2h5M2.7 9.2h5" stroke="#303030" stroke-width="0.900"/><path d="M6 4.5 h5.500 l3.500 3.500 v7.500 h-9 Z" fill="#fff" stroke="#101010" stroke-width="1.100"/><path d="M11.5 4.5 v3.500 h3.500" fill="none" stroke="#101010" stroke-width="0.900"/><path d="M8 9.0h2.500M8 11.0h5M8 13.0h5" stroke="#303030" stroke-width="0.900"/></svg>
<svg style="left:515px;top:340px" width="20" height="18" viewBox="0 0 20 18"><path d="M0.7 0.7 h5.500 l3.500 3.500 v7.500 h-9 Z" fill="#fff" stroke="#101010" stroke-width="1.100"/><path d="M6.2 0.7 v3.500 h3.500" fill="none" stroke="#101010" stroke-width="0.900"/><path d="M2.7 5.2h2.500M2.7 7.2h5M2.7 9.2h5" stroke="#303030" stroke-width="0.900"/><path d="M6 4.5 h5.500 l3.500 3.500 v7.500 h-9 Z" fill="#fff" stroke="#101010" stroke-width="1.100"/><path d="M11.5 4.5 v3.500 h3.500" fill="none" stroke="#101010" stroke-width="0.900"/><path d="M8 9.0h2.500M8 11.0h5M8 13.0h5" stroke="#303030" stroke-width="0.900"/><path d="M6.500 6.500 L15.500 15.500 M15.500 6.500 L6.500 15.500" stroke="#f01010" stroke-width="1.500"/></svg>
<svg style="left:541px;top:340px" width="20" height="18" viewBox="0 0 20 18"><path d="M2.500 0.500 L11.500 11 M14.500 0.500 L5.500 11" stroke="#101010" stroke-width="1.800" fill="none"/><ellipse cx="3.800" cy="13" rx="2.500" ry="2.600" fill="#fff" stroke="#1450d0" stroke-width="1.700"/><ellipse cx="13.200" cy="13" rx="2.500" ry="2.600" fill="#fff" stroke="#1450d0" stroke-width="1.700"/></svg>
<svg style="left:567px;top:340px" width="20" height="18" viewBox="0 0 20 18"><path d="M0.700 3.500 h3.500 l1.500 -2 h6 l1.500 2 h3 v11.800 h-15.500 z" fill="#ffff98" stroke="#000" stroke-width="1.300" stroke-linejoin="round"/><path d="M6.5 4.8 h5.500 l3.500 3.500 v7.500 h-9 Z" fill="#fff" stroke="#101010" stroke-width="1.100"/><path d="M12.0 4.8 v3.500 h3.500" fill="none" stroke="#101010" stroke-width="0.900"/><path d="M8.5 9.3h2.500M8.5 11.3h5M8.5 13.3h5" stroke="#303030" stroke-width="0.900"/></svg>
<svg style="left:592px;top:340px" width="20" height="18" viewBox="0 0 20 18"><path d="M1 3.500 L4.500 0.700 L8.500 5 L13 0.700 L16.500 2.500 L11 8 L16.500 14 L13.500 15.500 L8.500 10.500 L4 15.500 L0.700 13.500 L6 8 Z" fill="#f02020" stroke="#a00000" stroke-width="0.700" stroke-linejoin="round"/></svg>
<div class="a" style="left:403px;top:360px;width:26px;height:13px;background:#08a008"></div><div class="w" style="left:404px;top:361px;color:#fff;font-size:10px;transform:scaleX(1.32);transform-origin:0 0;text-shadow:1px 0 #043804,-1px 0 #043804,0 1px #043804,0 -1px #043804">rd</div><div class="a" style="left:430px;top:360px;width:26px;height:13px;background:#08a008"></div><div class="w" style="left:431px;top:361px;color:#fff;font-size:10px;transform:scaleX(1.15);transform-origin:0 0;text-shadow:1px 0 #043804,-1px 0 #043804,0 1px #043804,0 -1px #043804">fd</div><div class="a" style="left:457px;top:360px;width:26px;height:13px;background:#08a008"></div><div class="w" style="left:458px;top:361px;color:#fff;font-size:10px;transform:scaleX(1.12);transform-origin:0 0;text-shadow:1px 0 #043804,-1px 0 #043804,0 1px #043804,0 -1px #043804">hd0</div><div class="a" style="left:484px;top:360px;width:26px;height:13px;background:#08a008"></div><div class="w" style="left:485px;top:361px;color:#fff;font-size:10px;transform:scaleX(1.12);transform-origin:0 0;text-shadow:1px 0 #043804,-1px 0 #043804,0 1px #043804,0 -1px #043804">hd1</div><div class="a" style="left:511px;top:360px;width:26px;height:13px;background:#08a008"></div><div class="w" style="left:512px;top:361px;color:#fff;font-size:10px;transform:scaleX(1.15);transform-origin:0 0;text-shadow:1px 0 #043804,-1px 0 #043804,0 1px #043804,0 -1px #043804">cd3</div><div class="a" style="left:403px;top:376px;width:51px;height:13px;background:#fff"></div><div class="a" style="left:453px;top:376px;width:10px;height:13px;background:#6868e8"></div><svg style="left:453px;top:376px" width="10" height="13" viewBox="0 0 10 13"><path d="M3 10 L7 3" stroke="#fff" stroke-width="1.8"/></svg><div class="a" style="left:527px;top:376px;width:35px;height:13px;background:#fff;"></div><div class="w" style="left:530px;top:377px;font-size:10.5px">Name</div><div class="a" style="left:566px;top:376px;width:36px;height:13px;background:#c8c8fc;border:1px solid #a8a8e8;"></div><div class="w" style="left:569px;top:377px;font-size:10.5px">Type</div><div class="a" style="left:603px;top:376px;width:36px;height:13px;background:#fff;"></div><div class="w" style="left:606px;top:377px;font-size:10.5px">Size</div><div class="a" style="left:641px;top:376px;width:50px;height:13px;background:#fff;"></div><div class="w" style="left:644px;top:377px;font-size:10.5px">Date</div>
<div class="t" style="left:403.4px;top:379px;">/rd/1</div>
<div class="a" style="left:709px;top:360px;width:26px;height:13px;background:#08a008"></div><div class="w" style="left:710px;top:361px;color:#fff;font-size:10px;transform:scaleX(1.32);transform-origin:0 0;text-shadow:1px 0 #043804,-1px 0 #043804,0 1px #043804,0 -1px #043804">rd</div><div class="a" style="left:736px;top:360px;width:26px;height:13px;background:#08a008"></div><div class="w" style="left:737px;top:361px;color:#fff;font-size:10px;transform:scaleX(1.15);transform-origin:0 0;text-shadow:1px 0 #043804,-1px 0 #043804,0 1px #043804,0 -1px #043804">fd</div><div class="a" style="left:763px;top:360px;width:26px;height:13px;background:#08a008"></div><div class="w" style="left:764px;top:361px;color:#fff;font-size:10px;transform:scaleX(1.12);transform-origin:0 0;text-shadow:1px 0 #043804,-1px 0 #043804,0 1px #043804,0 -1px #043804">hd0</div><div class="a" style="left:790px;top:360px;width:26px;height:13px;background:#08a008"></div><div class="w" style="left:791px;top:361px;color:#fff;font-size:10px;transform:scaleX(1.12);transform-origin:0 0;text-shadow:1px 0 #043804,-1px 0 #043804,0 1px #043804,0 -1px #043804">hd1</div><div class="a" style="left:817px;top:360px;width:26px;height:13px;background:#08a008"></div><div class="w" style="left:818px;top:361px;color:#fff;font-size:10px;transform:scaleX(1.15);transform-origin:0 0;text-shadow:1px 0 #043804,-1px 0 #043804,0 1px #043804,0 -1px #043804">cd3</div><div class="a" style="left:709px;top:376px;width:51px;height:13px;background:#fff"></div><div class="a" style="left:759px;top:376px;width:10px;height:13px;background:#6868e8"></div><svg style="left:759px;top:376px" width="10" height="13" viewBox="0 0 10 13"><path d="M3 10 L7 3" stroke="#fff" stroke-width="1.8"/></svg><div class="a" style="left:833px;top:376px;width:35px;height:13px;background:#fff;"></div><div class="w" style="left:836px;top:377px;font-size:10.5px">Name</div><div class="a" style="left:872px;top:376px;width:36px;height:13px;background:#c8c8fc;border:1px solid #a8a8e8;"></div><div class="w" style="left:875px;top:377px;font-size:10.5px">Type</div><div class="a" style="left:909px;top:376px;width:36px;height:13px;background:#fff;"></div><div class="w" style="left:912px;top:377px;font-size:10.5px">Size</div><div class="a" style="left:947px;top:376px;width:50px;height:13px;background:#fff;"></div><div class="w" style="left:950px;top:377px;font-size:10.5px">Date</div>
<div class="t" style="left:709.4px;top:379px;">/tmp1/1</div>
<div class="a" style="left:403px;top:390px;width:288px;height:300px;background:#fff"></div>
<div class="a" style="left:709px;top:390px;width:288px;height:300px;background:#fff"></div>
<div class="a" style="left:403px;top:390px;width:288px;height:10px;background:#b9dcff"></div>
<svg style="left:403px;top:390px" width="10" height="10" viewBox="0 0 10 10"><path d="M0.500 3 V9 H9.500 V3 H5 L4 1.500 H1.500 L0.500 3 Z" fill="#ffd400" stroke="#6a4c00" stroke-width="1" stroke-linejoin="round"/><path d="M1.500 4H8.500" stroke="#fff0a0" stroke-width="0.800"/></svg>
<div class="k" style="left:414.600px;top:391px">3D</div>
<div class="k" style="left:568.600px;top:391px">&lt;DIR&gt; ----- 21.09.13</div>
<svg style="left:403px;top:400px" width="10" height="10" viewBox="0 0 10 10"><path d="M0.500 3 V9 H9.500 V3 H5 L4 1.500 H1.500 L0.500 3 Z" fill="#ffd400" stroke="#6a4c00" stroke-width="1" stroke-linejoin="round"/><path d="M1.500 4H8.500" stroke="#fff0a0" stroke-width="0.800"/></svg>
<div class="k" style="left:414.600px;top:401px">DEMOS</div>
<div class="k" style="left:568.600px;top:401px">&lt;DIR&gt; ----- 21.09.13</div>
<svg style="left:403px;top:410px" width="10" height="10" viewBox="0 0 10 10"><path d="M0.500 3 V9 H9.500 V3 H5 L4 1.500 H1.500 L0.500 3 Z" fill="#ffd400" stroke="#6a4c00" stroke-width="1" stroke-linejoin="round"/><path d="M1.500 4H8.500" stroke="#fff0a0" stroke-width="0.800"/></svg>
<div class="k" style="left:414.600px;top:411px">DEVELOP</div>
<div class="k" style="left:568.600px;top:411px">&lt;DIR&gt; ----- 21.09.13</div>
<svg style="left:403px;top:420px" width="10" height="10" viewBox="0 0 10 10"><path d="M0.500 3 V9 H9.500 V3 H5 L4 1.500 H1.500 L0.500 3 Z" fill="#ffd400" stroke="#6a4c00" stroke-width="1" stroke-linejoin="round"/><path d="M1.500 4H8.500" stroke="#fff0a0" stroke-width="0.800"/></svg>
<div class="k" style="left:414.600px;top:421px">DRIVERS</div>
<div class="k" style="left:568.600px;top:421px">&lt;DIR&gt; ----- 21.09.13</div>
<svg style="left:403px;top:430px" width="10" height="10" viewBox="0 0 10 10"><path d="M0.500 3 V9 H9.500 V3 H5 L4 1.500 H1.500 L0.500 3 Z" fill="#ffd400" stroke="#6a4c00" stroke-width="1" stroke-linejoin="round"/><path d="M1.500 4H8.500" stroke="#fff0a0" stroke-width="0.800"/></svg>
<div class="k" style="left:414.600px;top:431px">FONTS</div>
<div class="k" style="left:568.600px;top:431px">&lt;DIR&gt; ----- 21.09.13</div>
<svg style="left:403px;top:440px" width="10" height="10" viewBox="0 0 10 10"><path d="M0.500 3 V9 H9.500 V3 H5 L4 1.500 H1.500 L0.500 3 Z" fill="#ffd400" stroke="#6a4c00" stroke-width="1" stroke-linejoin="round"/><path d="M1.500 4H8.500" stroke="#fff0a0" stroke-width="0.800"/></svg>
<div class="k" style="left:414.600px;top:441px">File Managers</div>
<div class="k" style="left:568.600px;top:441px">&lt;DIR&gt; ----- 21.09.13</div>
<svg style="left:403px;top:450px" width="10" height="10" viewBox="0 0 10 10"><path d="M0.500 3 V9 H9.500 V3 H5 L4 1.500 H1.500 L0.500 3 Z" fill="#ffd400" stroke="#6a4c00" stroke-width="1" stroke-linejoin="round"/><path d="M1.500 4H8.500" stroke="#fff0a0" stroke-width="0.800"/></svg>
<div class="k" style="left:414.600px;top:451px">GAMES</div>
<div class="k" style="left:568.600px;top:451px">&lt;DIR&gt; ----- 21.09.13</div>
<svg style="left:403px;top:460px" width="10" height="10" viewBox="0 0 10 10"><path d="M0.500 3 V9 H9.500 V3 H5 L4 1.500 H1.500 L0.500 3 Z" fill="#ffd400" stroke="#6a4c00" stroke-width="1" stroke-linejoin="round"/><path d="M1.500 4H8.500" stroke="#fff0a0" stroke-width="0.800"/></svg>
<div class="k" style="left:414.600px;top:461px">LIB</div>
<div class="k" style="left:568.600px;top:461px">&lt;DIR&gt; ----- 21.09.13</div>
<svg style="left:403px;top:470px" width="10" height="10" viewBox="0 0 10 10"><path d="M0.500 3 V9 H9.500 V3 H5 L4 1.500 H1.500 L0.500 3 Z" fill="#ffd400" stroke="#6a4c00" stroke-width="1" stroke-linejoin="round"/><path d="M1.500 4H8.500" stroke="#fff0a0" stroke-width="0.800"/></svg>
<div class="k" style="left:414.600px;top:471px">MEDIA</div>
<div class="k" style="left:568.600px;top:471px">&lt;DIR&gt; ----- 21.09.13</div>
<svg style="left:403px;top:480px" width="10" height="10" viewBox="0 0 10 10"><path d="M0.500 3 V9 H9.500 V3 H5 L4 1.500 H1.500 L0.500 3 Z" fill="#ffd400" stroke="#6a4c00" stroke-width="1" stroke-linejoin="round"/><path d="M1.500 4H8.500" stroke="#fff0a0" stroke-width="0.800"/></svg>
<div class="k" style="left:414.600px;top:481px">NETWORK</div>
<div class="k" style="left:568.600px;top:481px">&lt;DIR&gt; ----- 21.09.13</div>
<svg style="left:403px;top:490px" width="10" height="10" viewBox="0 0 10 10"><path d="M1.500 1.500 H5.500 L8.500 4.500 V8.500 H1.500 Z" fill="#fff" stroke="#000" stroke-width="1"/><path d="M5.500 1.500 V4.500 H8.500" fill="none" stroke="#000" stroke-width="1"/></svg>
<div class="k" style="left:414.600px;top:491px">.shell</div>
<div class="k" style="left:568.600px;top:491px">         48 13.09.11</div>
<svg style="left:403px;top:500px" width="10" height="10" viewBox="0 0 10 10"><path d="M1.500 1.500 H5.500 L8.500 4.500 V8.500 H1.500 Z" fill="#fff" stroke="#000" stroke-width="1"/><path d="M5.500 1.500 V4.500 H8.500" fill="none" stroke="#000" stroke-width="1"/></svg>
<div class="k" style="left:414.600px;top:501px">@CLIP</div>
<div class="k" style="left:568.600px;top:501px">        550 07.06.13</div>
<svg style="left:403px;top:510px" width="10" height="10" viewBox="0 0 10 10"><path d="M1.500 1.500 H5.500 L8.500 4.500 V8.500 H1.500 Z" fill="#fff" stroke="#000" stroke-width="1"/><path d="M5.500 1.500 V4.500 H8.500" fill="none" stroke="#000" stroke-width="1"/></svg>
<div class="k" style="left:414.600px;top:511px">@ICON</div>
<div class="k" style="left:568.600px;top:511px">         4K 21.09.13</div>
<svg style="left:403px;top:520px" width="10" height="10" viewBox="0 0 10 10"><path d="M1.500 1.500 H5.500 L8.500 4.500 V8.500 H1.500 Z" fill="#fff" stroke="#000" stroke-width="1"/><path d="M5.500 1.500 V4.500 H8.500" fill="none" stroke="#000" stroke-width="1"/></svg>
<div class="k" style="left:414.600px;top:521px">@MENU</div>
<div class="k" style="left:568.600px;top:521px">         1K 07.06.13</div>
<svg style="left:403px;top:530px" width="10" height="10" viewBox="0 0 10 10"><path d="M1.500 1.500 H5.500 L8.500 4.500 V8.500 H1.500 Z" fill="#fff" stroke="#000" stroke-width="1"/><path d="M5.500 1.500 V4.500 H8.500" fill="none" stroke="#000" stroke-width="1"/></svg>
<div class="k" style="left:414.600px;top:531px">@NOTIFY</div>
<div class="k" style="left:568.600px;top:531px">         1K 13.03.13</div>
<svg style="left:403px;top:540px" width="10" height="10" viewBox="0 0 10 10"><path d="M1.500 1.500 H5.500 L8.500 4.500 V8.500 H1.500 Z" fill="#fff" stroke="#000" stroke-width="1"/><path d="M5.500 1.500 V4.500 H8.500" fill="none" stroke="#000" stroke-width="1"/></svg>
<div class="k" style="left:414.600px;top:541px">@PANEL</div>
<div class="k" style="left:568.600px;top:541px">         5K 11.09.13</div>
<svg style="left:403px;top:550px" width="10" height="10" viewBox="0 0 10 10"><path d="M1.500 1.500 H5.500 L8.500 4.500 V8.500 H1.500 Z" fill="#fff" stroke="#000" stroke-width="1"/><path d="M5.500 1.500 V4.500 H8.500" fill="none" stroke="#000" stroke-width="1"/></svg>
<div class="k" style="left:414.600px;top:551px">@SS</div>
<div class="k" style="left:568.600px;top:551px">         1K 11.06.13</div>
<svg style="left:403px;top:560px" width="10" height="10" viewBox="0 0 10 10"><path d="M1.500 1.500 H5.500 L8.500 4.500 V8.500 H1.500 Z" fill="#fff" stroke="#000" stroke-width="1"/><path d="M5.500 1.500 V4.500 H8.500" fill="none" stroke="#000" stroke-width="1"/></svg>
<div class="k" style="left:414.600px;top:561px">ASCIIVJU</div>
<div class="k" style="left:568.600px;top:561px">        724 07.06.13</div>
<svg style="left:403px;top:570px" width="10" height="10" viewBox="0 0 10 10"><path d="M1.500 1.500 H5.500 L8.500 4.500 V8.500 H1.500 Z" fill="#fff" stroke="#000" stroke-width="1"/><path d="M5.500 1.500 V4.500 H8.500" fill="none" stroke="#000" stroke-width="1"/></svg>
<div class="k" style="left:414.600px;top:571px">CALC</div>
<div class="k" style="left:568.600px;top:571px">         1K 08.06.13</div>
<svg style="left:403px;top:580px" width="10" height="10" viewBox="0 0 10 10"><path d="M1.500 1.500 H5.500 L8.500 4.500 V8.500 H1.500 Z" fill="#fff" stroke="#000" stroke-width="1"/><path d="M5.500 1.500 V4.500 H8.500" fill="none" stroke="#000" stroke-width="1"/></svg>
<div class="k" style="left:414.600px;top:581px">CALENDAR</div>
<div class="k" style="left:568.600px;top:581px">         1K 11.09.13</div>
<svg style="left:403px;top:590px" width="10" height="10" viewBox="0 0 10 10"><path d="M1.500 1.500 H5.500 L8.500 4.500 V8.500 H1.500 Z" fill="#fff" stroke="#000" stroke-width="1"/><path d="M5.500 1.500 V4.500 H8.500" fill="none" stroke="#000" stroke-width="1"/></svg>
<div class="k" style="left:414.600px;top:591px">COLRDIAL</div>
<div class="k" style="left:568.600px;top:591px">         1K 07.06.13</div>
<svg style="left:403px;top:600px" width="10" height="10" viewBox="0 0 10 10"><path d="M1.500 1.500 H5.500 L8.500 4.500 V8.500 H1.500 Z" fill="#fff" stroke="#000" stroke-width="1"/><path d="M5.500 1.500 V4.500 H8.500" fill="none" stroke="#000" stroke-width="1"/></svg>
<div class="k" style="left:414.600px;top:601px">COMMOUSE</div>
<div class="k" style="left:568.600px;top:601px">         62 07.06.13</div>
<svg style="left:403px;top:610px" width="10" height="10" viewBox="0 0 10 10"><path d="M1.500 1.500 H5.500 L8.500 4.500 V8.500 H1.500 Z" fill="#fff" stroke="#000" stroke-width="1"/><path d="M5.500 1.500 V4.500 H8.500" fill="none" stroke="#000" stroke-width="1"/></svg>
<div class="k" style="left:414.600px;top:611px">CPU</div>
<div class="k" style="left:568.600px;top:611px">         1K 08.07.13</div>
<svg style="left:403px;top:620px" width="10" height="10" viewBox="0 0 10 10"><path d="M1.500 1.500 H5.500 L8.500 4.500 V8.500 H1.500 Z" fill="#fff" stroke="#000" stroke-width="1"/><path d="M5.500 1.500 V4.500 H8.500" fill="none" stroke="#000" stroke-width="1"/></svg>
<div class="k" style="left:414.600px;top:621px">CPUID</div>
<div class="k" style="left:568.600px;top:621px">        17K 07.06.13</div>
<svg style="left:403px;top:630px" width="10" height="10" viewBox="0 0 10 10"><path d="M1.500 1.500 H5.500 L8.500 4.500 V8.500 H1.500 Z" fill="#fff" stroke="#000" stroke-width="1"/><path d="M5.500 1.500 V4.500 H8.500" fill="none" stroke="#000" stroke-width="1"/></svg>
<div class="k" style="left:414.600px;top:631px">CROPFLAT</div>
<div class="k" style="left:568.600px;top:631px">        174 07.06.13</div>
<svg style="left:403px;top:640px" width="10" height="10" viewBox="0 0 10 10"><path d="M1.500 1.500 H5.500 L8.500 4.500 V8.500 H1.500 Z" fill="#fff" stroke="#000" stroke-width="1"/><path d="M5.500 1.500 V4.500 H8.500" fill="none" stroke="#000" stroke-width="1"/></svg>
<div class="k" style="left:414.600px;top:641px">DESKTOP</div>
<div class="k" style="left:568.600px;top:641px">         2K 07.06.13</div>
<svg style="left:403px;top:650px" width="10" height="10" viewBox="0 0 10 10"><path d="M1.500 1.500 H5.500 L8.500 4.500 V8.500 H1.500 Z" fill="#fff" stroke="#000" stroke-width="1"/><path d="M5.500 1.500 V4.500 H8.500" fill="none" stroke="#000" stroke-width="1"/></svg>
<div class="k" style="left:414.600px;top:651px">DISPTEST</div>
<div class="k" style="left:568.600px;top:651px">         1K 07.06.13</div>
<svg style="left:403px;top:660px" width="10" height="10" viewBox="0 0 10 10"><path d="M1.500 1.500 H5.500 L8.500 4.500 V8.500 H1.500 Z" fill="#fff" stroke="#000" stroke-width="1"/><path d="M5.500 1.500 V4.500 H8.500" fill="none" stroke="#000" stroke-width="1"/></svg>
<div class="k" style="left:414.600px;top:661px">DOCPACK</div>
<div class="k" style="left:568.600px;top:661px">       105K 17.09.13</div>
<svg style="left:403px;top:670px" width="10" height="10" viewBox="0 0 10 10"><path d="M1.500 1.500 H5.500 L8.500 4.500 V8.500 H1.500 Z" fill="#fff" stroke="#000" stroke-width="1"/><path d="M5.500 1.500 V4.500 H8.500" fill="none" stroke="#000" stroke-width="1"/></svg>
<div class="k" style="left:414.600px;top:671px">END</div>
<div class="k" style="left:568.600px;top:671px">        453 07.06.13</div>
<svg style="left:403px;top:680px" width="10" height="10" viewBox="0 0 10 10"><path d="M1.500 1.500 H5.500 L8.500 4.500 V8.500 H1.500 Z" fill="#fff" stroke="#000" stroke-width="1"/><path d="M5.500 1.500 V4.500 H8.500" fill="none" stroke="#000" stroke-width="1"/></svg>
<div class="k" style="left:414.600px;top:681px">GMON</div>
<div class="k" style="left:568.600px;top:681px">         3K 07.06.13</div>
<svg style="left:709px;top:391px" width="11" height="9" viewBox="0 0 11 9"><path d="M4 0 L0 4 H2.500 V8 H10 V6 H5.500 V4 H8 Z" fill="#0808e8"/></svg>
<div class="k" style="left:721px;top:391px;font-weight:bold">..</div>
<div class="k" style="left:875px;top:391px">&lt;DIR&gt; ----- 21.09.13</div>
<div class="a" style="left:691px;top:390px;width:16px;height:300px;background:#ececec;border-left:1px solid #000;border-right:1px solid #000;border-top:1px solid #000"></div><div class="a" style="left:692px;top:391px;width:14px;height:14px;background:#b9dcff"></div><div class="a" style="left:691px;top:405px;width:16px;height:1px;background:#000"></div><div class="a" style="left:692px;top:406px;width:14px;height:135px;background:#b9dcff"></div><div class="a" style="left:691px;top:541px;width:16px;height:1px;background:#000"></div><svg style="left:691px;top:390px" width="16" height="300"><path d="M8 5.500 L12 9.500 H4 Z" fill="#000"/><path d="M3 79h11M3 83h11M3 86h11" stroke="#000" stroke-width="1" transform="translate(0,0.5)"/></svg>
<div class="a" style="left:997px;top:390px;width:16px;height:300px;background:#ececec;border-left:1px solid #000;border-right:1px solid #000;border-top:1px solid #000"></div><div class="a" style="left:998px;top:391px;width:14px;height:14px;background:#b9dcff"></div><div class="a" style="left:997px;top:405px;width:16px;height:1px;background:#000"></div><div class="a" style="left:998px;top:406px;width:14px;height:270px;background:#b9dcff"></div><div class="a" style="left:997px;top:676px;width:16px;height:1px;background:#000"></div><svg style="left:997px;top:390px" width="16" height="300"><path d="M8 5.500 L12 9.500 H4 Z" fill="#000"/><path d="M3 147h11M3 151h11M3 154h11" stroke="#000" stroke-width="1" transform="translate(0,0.5)"/></svg>
<svg style="left:345px;top:253px" width="11" height="17" viewBox="0 0 11 17"><path d="M0 0.800 V14 L3.200 11 L5.200 15.900 H7.200 L5.600 10 L9.300 9.600 Z" fill="#fff"/></svg>
</body></html>
